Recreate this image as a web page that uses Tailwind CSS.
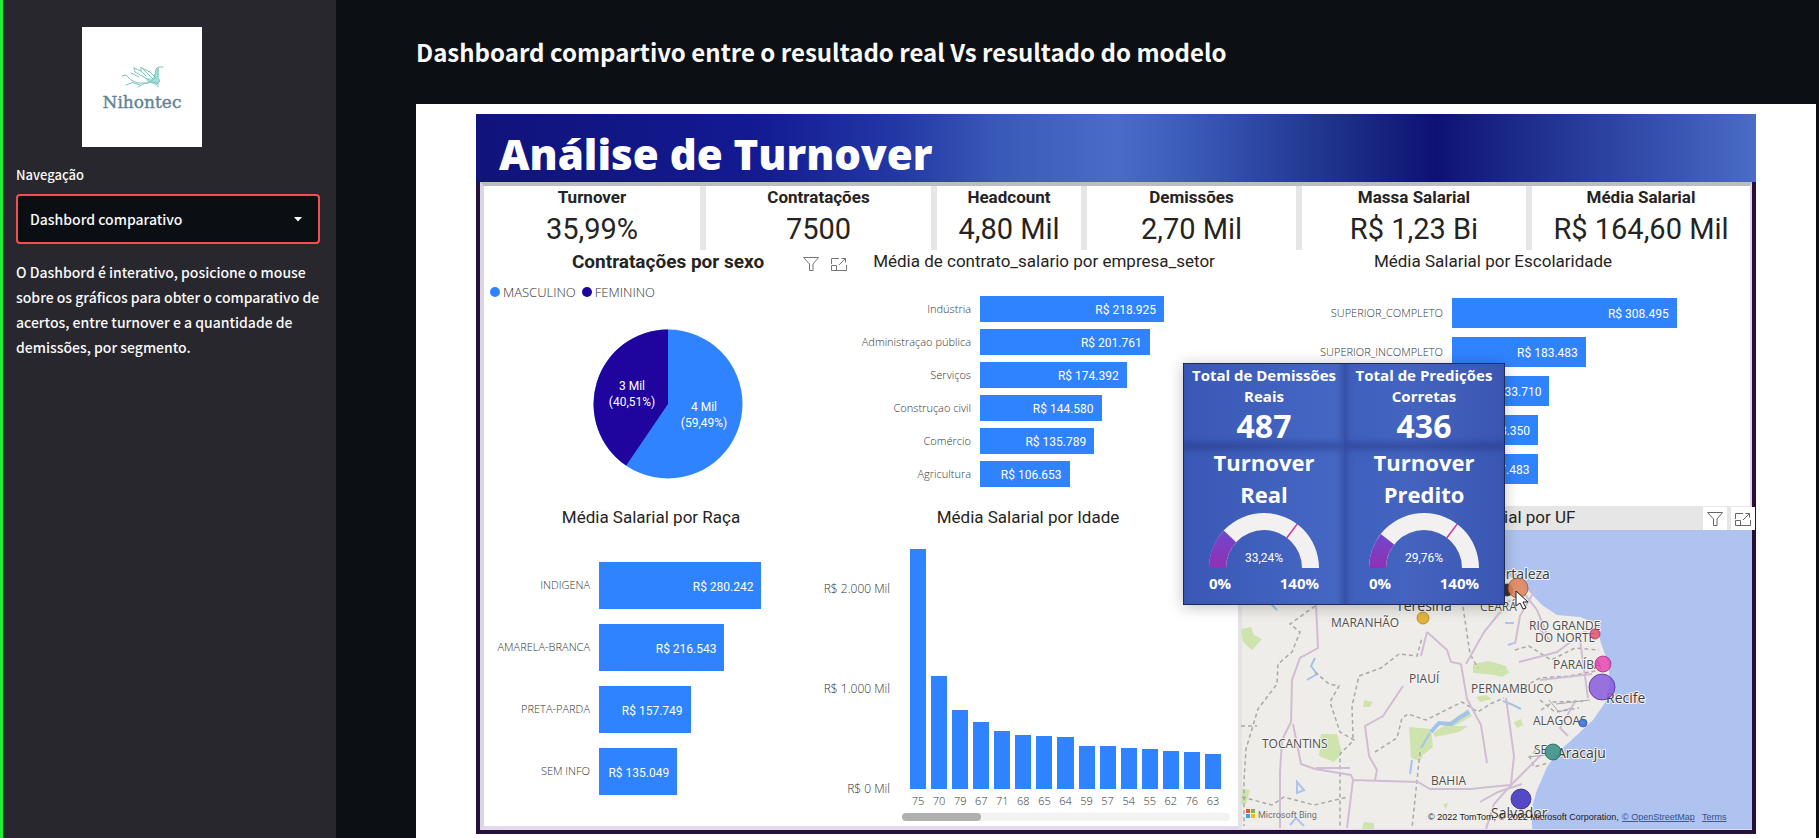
<!DOCTYPE html>
<html lang="pt-BR">
<head>
<meta charset="utf-8">
<meta name="viewport" content="width=device-width, initial-scale=1">
<title>Análise de Turnover</title>
<script src="https://cdn.jsdelivr.net/npm/@tailwindcss/browser@4"></script>
</head>
<body class="flex min-h-screen bg-[#0c1014] font-['Noto_Sans_CJK_SC','Open_Sans',sans-serif] text-[#fafafa]">

<aside class="w-[336px] shrink-0 border-l-3 border-[#1df03a] bg-[#28272e] pt-[27px] pr-4 pl-[13px]">
  <div class="ml-[66px] flex size-[120px] items-center justify-center bg-white">
    <svg class="size-full" viewBox="0 0 120 120" role="img" aria-label="Nihontec">
      <path d="M63 51l8 1 4-11 2 1-1 9 2 3-4 4-8-3z" fill="#a5ded6"/>
      <g fill="none" stroke="#7fc2bf" stroke-width="1" stroke-linejoin="round" stroke-linecap="round">
        <path d="M40 49l4-1 5 5 7 3 10 0 6-4 2-10 2-2 5 0M76 41l0 10 2 3-4 4"/>
        <path d="M71 52L59 40l0 4 5 5M52 41l1 4 14 8M59 44l-7-3M49 46l8 4M60 41l8 4 6 6"/>
        <path d="M44 58l8-3M56 60l5-3 8-2 7 1 0 4M52 56l6 2"/>
      </g>
      <text x="60" y="81" text-anchor="middle" font-family="DejaVu Serif, serif" font-size="17" fill="#5f8496" stroke="#5f8496" stroke-width=".4">Nihontec</text>
    </svg>
  </div>
  <label for="nav" class="mt-4 block text-[13px] leading-6 font-medium">Navegação</label>
  <div class="relative mt-[7px]">
    <select id="nav" class="block h-[50px] w-full appearance-none rounded-sm border-2 border-[#f0504f] bg-[#0b0f14] px-3 text-[14px] font-medium text-[#fafafa]"><option>Dashbord comparativo</option></select>
    <svg class="pointer-events-none absolute top-[23px] right-[18px] h-[5px] w-2" viewBox="0 0 8 5"><path d="M0 0h8L4 4.500z" fill="#fff"/></svg>
  </div>
  <p class="mt-4 text-[14px] leading-[25px] font-medium">O Dashbord é interativo, posicione o mouse sobre os gráficos para obter o comparativo de acertos, entre turnover e a quantidade de demissões, por segmento.</p>
</aside>

<main class="flex min-w-0 flex-1 flex-col pr-[3px] pl-20">
  <h1 class="flex h-[104px] items-center text-[24px] font-bold">Dashboard compartivo entre o resultado real Vs resultado do modelo</h1>

  <div class="flex-1 bg-white px-[60px] pt-[10px] pb-1 font-['Open_Sans','Noto_Sans',sans-serif] text-[#252423]">
   <div class="relative">
    <header class="flex h-[68px] items-center bg-[linear-gradient(90deg,#10137a_0%,#131a92_22%,#2338a5_33%,#3a5ab8_41%,#4a6cc8_50%,#3a5ab8_56%,#20368f_66%,#0d1272_75%,#20308f_83%,#3752b0_93%,#4a6cc6_100%)] pt-3 pl-[23px]">
      <h2 class="text-[42px] leading-none font-extrabold text-white">Análise de Turnover</h2>
    </header>

    <div class="border-x-4 border-b-4 border-[#260f38]">
     <div class="border-t-4 border-r-2 border-b-4 border-l-4 border-t-[#bdbcc2] border-r-[#e3d6ec] border-b-[#e3d9ec] border-l-[#dcd6e0]">

      <dl class="grid h-[64px] grid-cols-[222fr_231fr_150fr_215fr_230fr_218fr] text-center font-[Roboto,sans-serif] [&>div]:border-[#e6e6e6] [&_dd]:text-[29px] [&_dd]:leading-[42px] [&_dt]:text-[17px] [&_dt]:leading-[22px] [&_dt]:font-bold">
        <div class="border-r-6"><dt>Turnover</dt><dd>35,99%</dd></div>
        <div class="border-r-6"><dt>Contratações</dt><dd>7500</dd></div>
        <div class="border-r-6"><dt>Headcount</dt><dd>4,80 Mil</dd></div>
        <div class="border-r-6"><dt>Demissões</dt><dd>2,70 Mil</dd></div>
        <div class="border-r-6"><dt>Massa Salarial</dt><dd>R$ 1,23 Bi</dd></div>
        <div><dt>Média Salarial</dt><dd>R$ 164,60 Mil</dd></div>
      </dl>

      <div class="grid h-64 grid-cols-[368fr_384fr_514fr]">
        <section>
          <div class="grid h-6 grid-cols-[1fr_auto_1fr] items-center">
            <h3 class="col-start-2 font-[Roboto,sans-serif] text-[19px] leading-6 font-bold">Contratações por sexo</h3>
            <div class="flex gap-3 pt-1 pl-[39px]">
              <button aria-label="Filtros"><svg class="size-4" viewBox="0 0 16 16" fill="none" stroke="#777"><path d="M.5 1.500h15L10 8v6.500H6.500V8z"/></svg></button>
              <button aria-label="Modo de foco"><svg class="size-4" viewBox="0 0 16 16" fill="none" stroke="#777"><path d="M.5 8V2.500H8M15.500 9v5.500H.5V9.500h5v5M8 9l6.500-6.500M10.500 2.500h4v4"/></svg></button>
            </div>
          </div>
          <ul class="mt-[10px] flex gap-[6px] pl-[6px] text-[13px] leading-4 font-light text-[#333]">
            <li class="flex items-center gap-[3px]"><span class="size-[10px] rounded-full bg-[#3083ff]"></span>MASCULINO</li>
            <li class="flex items-center gap-[3px]"><span class="size-[10px] rounded-full bg-[#1f059e]"></span>FEMININO</li>
          </ul>
          <svg class="mx-auto mt-[29px] block size-[150px] font-[Roboto,sans-serif]" viewBox="0 0 150 150" font-size="12" fill="#fff" text-anchor="middle">
            <circle cx="75" cy="75" r="74.500" fill="#3083ff"/>
            <path d="M75 75V.5A74.500 74.500 0 0 0 33.200 136.600Z" fill="#1f059e"/>
            <text x="39" y="61">3 Mil</text><text x="39" y="77">(40,51%)</text>
            <text x="111" y="82">4 Mil</text><text x="111" y="98">(59,49%)</text>
          </svg>
        </section>

        <section>
          <h3 class="h-6 text-center font-[Roboto,sans-serif] text-[17px] leading-[22px]">Média de contrato_salario por empresa_setor</h3>
          <ul class="mt-[22px] flex flex-col gap-[7px] text-[11px] [&_div]:flex [&_div]:h-[26px] [&_div]:items-center [&_div]:justify-end [&_div]:bg-[#3083ff] [&_div]:pt-[2px] [&_div]:pr-2 [&_div]:font-[Roboto,sans-serif] [&_div]:text-[12px] [&_div]:text-white [&_li]:grid [&_li]:grid-cols-[119px_1fr] [&_li]:items-center [&_li]:gap-[9px] [&_span]:text-right [&_span]:font-light [&_span]:text-[#333]">
            <li><span>Indústria</span><div style="width:71.9%">R$ 218.925</div></li>
            <li><span>Administraçao pública</span><div style="width:66.3%">R$ 201.761</div></li>
            <li><span>Serviços</span><div style="width:57.3%">R$ 174.392</div></li>
            <li><span>Construçao civil</span><div style="width:47.5%">R$ 144.580</div></li>
            <li><span>Comércio</span><div style="width:44.6%">R$ 135.789</div></li>
            <li><span>Agricultura</span><div style="width:35%">R$ 106.653</div></li>
          </ul>
        </section>

        <section>
          <h3 class="h-6 text-center font-[Roboto,sans-serif] text-[17px] leading-[22px]">Média Salarial por Escolaridade</h3>
          <ul class="mt-6 flex flex-col gap-[9px] text-[11px] [&_div]:flex [&_div]:h-[30px] [&_div]:items-center [&_div]:justify-end [&_div]:bg-[#3083ff] [&_div]:pt-[2px] [&_div]:pr-2 [&_div]:font-[Roboto,sans-serif] [&_div]:text-[12px] [&_div]:text-white [&_li]:grid [&_li]:grid-cols-[207px_1fr] [&_li]:items-center [&_li]:gap-[9px] [&_span]:text-right [&_span]:font-light [&_span]:text-[#333]">
            <li><span>SUPERIOR_COMPLETO</span><div style="width:75.4%">R$ 308.495</div></li>
            <li><span>SUPERIOR_INCOMPLETO</span><div style="width:44.9%">R$ 183.483</div></li>
            <li><span></span><div style="width:32.7%">R$ 133.710</div></li>
            <li><span></span><div style="width:28.9%">R$ 118.350</div></li>
            <li><span></span><div style="width:28.7%">R$ 117.483</div></li>
          </ul>
        </section>
      </div>

      <div class="grid h-80 grid-cols-[334fr_420fr_512fr]">
        <section>
          <h3 class="h-6 text-center font-[Roboto,sans-serif] text-[17px] leading-[22px]">Média Salarial por Raça</h3>
          <ul class="mt-8 flex flex-col gap-[15px] text-[11px] [&_div]:flex [&_div]:h-[47px] [&_div]:items-center [&_div]:justify-end [&_div]:bg-[#3083ff] [&_div]:pt-[2px] [&_div]:pr-2 [&_div]:font-[Roboto,sans-serif] [&_div]:text-[12px] [&_div]:text-white [&_li]:grid [&_li]:grid-cols-[106px_1fr] [&_li]:items-center [&_li]:gap-[9px] [&_span]:text-right [&_span]:font-light [&_span]:text-[#333]">
            <li><span>INDIGENA</span><div style="width:74.2%">R$ 280.242</div></li>
            <li><span>AMARELA-BRANCA</span><div style="width:57.3%">R$ 216.543</div></li>
            <li><span>PRETA-PARDA</span><div style="width:41.8%">R$ 157.749</div></li>
            <li><span>SEM INFO</span><div style="width:35.7%">R$ 135.049</div></li>
          </ul>
        </section>

        <section>
          <h3 class="h-6 text-center font-[Roboto,sans-serif] text-[17px] leading-[22px]">Média Salarial por Idade</h3>
          <div class="mt-[19px] grid grid-cols-[72px_1fr] gap-x-3 pr-2 text-[12px] font-light text-[#333]">
            <div class="flex flex-col gap-[82px] pt-[31px] text-right leading-[18px] whitespace-nowrap">
              <span>R$ 2.000 Mil</span><span>R$ 1.000 Mil</span><span>R$ 0 Mil</span>
            </div>
            <div>
              <div class="flex h-60 items-end gap-[5px] pr-[9px] pl-2 [&>i]:flex-1 [&>i]:bg-[#3083ff]">
                <i style="height:100%"></i><i style="height:47%"></i><i style="height:33%"></i><i style="height:28%"></i><i style="height:24.100%"></i><i style="height:22.500%"></i><i style="height:22.200%"></i><i style="height:21.500%"></i><i style="height:17.800%"></i><i style="height:17.800%"></i><i style="height:17%"></i><i style="height:16.600%"></i><i style="height:15.800%"></i><i style="height:15.600%"></i><i style="height:14.500%"></i>
              </div>
              <div class="flex gap-[5px] pt-1 pr-[9px] pl-2 text-[11px] leading-4 [&>span]:flex [&>span]:w-0 [&>span]:flex-1 [&>span]:justify-center">
                <span>75</span><span>70</span><span>79</span><span>67</span><span>71</span><span>68</span><span>65</span><span>64</span><span>59</span><span>57</span><span>54</span><span>55</span><span>62</span><span>76</span><span>63</span>
              </div>
              <div class="mt-1 h-2 rounded-full bg-[#f3f2f2]"><div class="h-2 w-[24%] rounded-full bg-[#b0b0b0]"></div></div>
            </div>
          </div>
        </section>

        <section class="relative -mr-[2px] -mb-[3px] flex min-w-0 flex-col">
          <h3 class="h-6 bg-[#e6e6e6] text-center font-[Roboto,sans-serif] text-[17px] leading-[22px]">Média Salarial por UF</h3>
          <div class="absolute top-px -right-[3px] flex gap-1">
            <button aria-label="Filtros" class="flex h-[23px] w-6 items-center justify-center bg-white"><svg class="size-4" viewBox="0 0 16 16" fill="none" stroke="#666"><path d="M.5 1.500h15L10 8v6.500H6.500V8z"/></svg></button>
            <button aria-label="Modo de foco" class="flex h-[23px] w-6 items-center justify-center bg-white"><svg class="size-4" viewBox="0 0 16 16" fill="none" stroke="#666"><path d="M.5 8V2.500H8M15.500 9v5.500H.5V9.500h5v5M8 9l6.500-6.500M10.500 2.500h4v4"/></svg></button>
          </div>
          <svg class="block min-h-0 w-full flex-1" viewBox="1238 530 514 299" preserveAspectRatio="xMidYMid slice" font-size="12">
            <rect x="1230" y="520" width="530" height="320" fill="#aec3f0"/>
            <path d="M1230 520H1400L1480 558 1505 574 1520 582 1542 605 1557 615 1580 617 1595 623 1601 643 1608 663 1610 683 1605 703 1593 720 1577 735 1557 753 1547 767 1537 790 1531 810 1533 840H1230Z" fill="#efedea"/>
            <path d="M1237 530h5v300h-5z" fill="#e4e2e4"/>
            <g fill="#cfe3ae">
              <path d="M1241 629l10-2 3 8 8 4-10 11-9-8z"/><path d="M1321 734h16l5 19-8 9-15-6z"/><path d="M1409 727l22 2 2 18-10 8-3 6-9-3z"/>
              <path d="M1433 733l15-10 20-14 4 7-18 10 14 0-9 6-24 5z"/><path d="M1364 700l9 2-3 5-7 0z"/><path d="M1473 664l16-3 17 5 2 6-10 3-25-2z"/><path d="M1476 697l10-2 6 4-12 3z"/>
              <path d="M1478 664l18 2 14 6-8 5-24-6z"/><path d="M1514 722l7-3 2 6-6 3z"/><path d="M1242 789l8 1-4 14-5 0z"/><path d="M1364 822l10 1 0 6-12 0z"/><path d="M1443 804l5-1-2 6z"/>
            </g>
            <g fill="none" stroke="#a3c4ea" stroke-width="2">
              <path d="M1431 732l8-9 12 1 8-6 10-6" stroke-width="4"/><path d="M1315 658l-4 8 6 8-10 6M1271 604l6 6"/><path d="M1503 701l10 4 8 4M1430 733l-9 15M1412 760l-2 14"/>
              <path d="M1297 782l7 8-7 3zM1290 825l6-7 8 8M1505 623l9 0M1508 645l6-2" stroke="#aec3f0"/>
            </g>
            <g fill="none" stroke="#a9a9a9" stroke-width="1.500" stroke-dasharray="4 3">
              <path d="M1315 606l-25 18 10 8-8 20-14 12-1 20-19 25-12 40-2 32 0 45"/>
              <path d="M1315 672l14 12 10 2-9 16 10 30 14 8-14 14v74"/>
              <path d="M1353 738l-1-32 7-30 22-8 18-14 18 2 5-18"/>
              <path d="M1375 752l22-14 5-20 6-4 18 6 36-18 16 10 12-8 14-6"/>
              <path d="M1462 600l8 54 8 14M1242 797l30 8 12-8 30 8 34-8M1420 752l-8 76"/>
              <path d="M1515 650l14-4 22 14 24-12 24 2M1518 690l22-12 30-2 30-6M1540 745l-10 12 4 10 14-4M1540 700l15 12 24-4"/>
              <path d="M1241 726h16M1541 710l12-8 30-1"/>
            </g>
            <g fill="none" stroke="#d0bdd3" stroke-width="2">
              <path d="M1316 604l2 44-18 10-8 22-1 42-9 18-2 32 0 56M1293 724l8 40 14 5 36 6 2 5-6 48M1353 780l65 2 12 7 40 0 40-4M1316 768l34 0"/>
              <path d="M1427 632l-6 24M1427 632l20 18 4 12 10 2M1510 600l-26 32-18 32M1461 664l6 35 14 26 6 38M1403 686l-20 30-18 10 4 30 8 14-2 10"/>
              <path d="M1506 698l8 58-3 28M1486 829l8-25 18-20 30-30M1515 644l5-28 16-28M1523 592l14 18 10 24M1519 662l38-10 30-22M1580 640l8 58M1576 700l-16 28 8 8M1480 802l18-10 24-8M1540 680l52-6M1530 620l20 20"/>
            </g>
            <g fill="none" stroke="#a9a9a9"><path d="M1549 700l10 12 12-4M1546 755l-18 2M1590 700l-34 4"/></g>
            <g fill="#505050" stroke="#f5f3f1" stroke-width="2" paint-order="stroke" stroke-linejoin="round">
              <text x="1331" y="627">MARANHÃO</text><text x="1409" y="683">PIAUÍ</text><text x="1471" y="693">PERNAMBUCO</text><text x="1262" y="748">TOCANTINS</text><text x="1431" y="785">BAHIA</text>
              <text x="1480" y="611">CEARÁ</text><text x="1529" y="630">RIO GRANDE</text><text x="1535" y="642">DO NORTE</text><text x="1553" y="669">PARAÍBA</text><text x="1533" y="725">ALAGOAS</text><text x="1534" y="754">SE</text>
              <g font-size="14" fill="#3c3c3c"><text x="1396" y="611">Teresina</text><text x="1490" y="579">Fortaleza</text><text x="1606" y="703">Recife</text><text x="1557" y="758">Aracaju</text><text x="1491" y="818">Salvador</text></g>
            </g>
            <g stroke-opacity=".7">
              <circle cx="1423" cy="618" r="6" fill="#e2b43c" stroke="#a07818"/>
              <circle cx="1507" cy="590" r="6" fill="#40302e" stroke="#222"/>
              <circle cx="1518" cy="588" r="10" fill="#e0895f" fill-opacity=".92" stroke="#8d4a2c"/>
              <circle cx="1595" cy="634" r="5" fill="#e5506f" fill-opacity=".85" stroke="#a02c4a"/>
              <circle cx="1603" cy="664" r="8" fill="#e548b0" fill-opacity=".85" stroke="#9c2480"/>
              <circle cx="1602" cy="687" r="13" fill="#8a5bdc" fill-opacity=".85" stroke="#48248c"/>
              <circle cx="1583" cy="723" r="4" fill="#4478e0" fill-opacity=".9" stroke="#244c9c"/>
              <circle cx="1553" cy="752" r="8" fill="#3d9088" fill-opacity=".9" stroke="#1c5a54"/>
              <circle cx="1521" cy="799" r="10" fill="#473cc4" fill-opacity=".92" stroke="#241c78"/>
            </g>
            <g><path fill="#e8562a" d="M1246 809h4v4h-4z"/><path fill="#80b928" d="M1251 809h4v4h-4z"/><path fill="#3fa0e4" d="M1246 814h4v4h-4z"/><path fill="#f5b920" d="M1251 814h4v4h-4z"/></g>
            <text x="1258" y="818" font-family="Roboto, sans-serif" font-size="9" fill="#707070">Microsoft Bing</text>
            <g font-family="Liberation Sans, sans-serif" font-size="9" fill="#222">
              <text x="1428" y="820">© 2022 TomTom, © 2022 Microsoft Corporation,</text>
              <a href="#osm"><text x="1622" y="820" fill="#33508c" text-decoration="underline">© OpenStreetMap</text></a>
              <a href="#terms"><text x="1702" y="820" fill="#33508c" text-decoration="underline">Terms</text></a>
            </g>
            <path d="M1516 591v15l4-3 3 6 3-1-3-6h5z" fill="#fff" stroke="#222"/>
          </svg>
        </section>
      </div>
     </div>
    </div>

    <div role="tooltip" class="absolute top-[249px] left-[707px] grid w-[322px] grid-cols-2 border border-[#1f2a55] text-center font-bold text-white shadow-[0_2px_14px_rgba(0,0,0,0.25)]">
      <div class="h-[82px] bg-[linear-gradient(90deg,#3a58b5,#4668c4)] pt-px shadow-[inset_-3px_-4px_6px_rgba(30,40,110,0.35)]"><h4 class="text-[15px] leading-[21px]">Total de Demissões<br>Reais</h4><p class="text-[32px] leading-[37px]">487</p></div>
      <div class="h-[82px] bg-[linear-gradient(90deg,#3f5fbd,#4464c0_40%,#3a56b2)] pt-px shadow-[inset_3px_-4px_6px_rgba(30,40,110,0.35)]"><h4 class="text-[15px] leading-[21px]">Total de Predições<br>Corretas</h4><p class="text-[32px] leading-[37px]">436</p></div>
      <div class="h-[158px] bg-[linear-gradient(90deg,#3a58b5,#4668c4)] shadow-[inset_-3px_4px_6px_rgba(30,40,110,0.35)]">
        <h4 class="text-[22px] leading-8">Turnover<br>Real</h4>
        <svg class="mx-auto block h-[88px] w-[120px]" viewBox="0 0 120 88">
          <defs><linearGradient id="fillGradient" x1="0" y1="0" x2="0" y2="1"><stop offset="0" stop-color="#7048cc"/><stop offset="1" stop-color="#9030b4"/></linearGradient></defs>
          <path d="M5 58A55 55 0 0 1 115 58H98A38 38 0 0 0 22 58Z" fill="#f2f0f0"/>
          <path d="M5 58A55 55 0 0 1 19.700 20.600L32.200 32.200A38 38 0 0 0 22 58Z" fill="url(#fillGradient)"/>
          <path d="M82.900 27.700L93.100 14.100" stroke="#d0309c" stroke-width="1.500"/>
          <text x="60" y="52" font-family="Roboto, sans-serif" font-size="12" font-weight="400" text-anchor="middle" fill="#fff">33,24%</text>
          <g font-size="15" fill="#fff"><text x="5" y="79">0%</text><text x="115" y="79" text-anchor="end">140%</text></g>
        </svg>
      </div>
      <div class="h-[158px] bg-[linear-gradient(90deg,#3f5fbd,#4464c0_40%,#3a56b2)] shadow-[inset_3px_4px_6px_rgba(30,40,110,0.35)]">
        <h4 class="text-[22px] leading-8">Turnover<br>Predito</h4>
        <svg class="mx-auto block h-[88px] w-[120px]" viewBox="0 0 120 88">
          <path d="M5 58A55 55 0 0 1 115 58H98A38 38 0 0 0 22 58Z" fill="#f2f0f0"/>
          <path d="M5 58A55 55 0 0 1 16.800 24L30.200 34.500A38 38 0 0 0 22 58Z" fill="url(#fillGradient)"/>
          <path d="M82.900 27.700L93.100 14.100" stroke="#d0309c" stroke-width="1.500"/>
          <text x="60" y="52" font-family="Roboto, sans-serif" font-size="12" font-weight="400" text-anchor="middle" fill="#fff">29,76%</text>
          <g font-size="15" fill="#fff"><text x="5" y="79">0%</text><text x="115" y="79" text-anchor="end">140%</text></g>
        </svg>
      </div>
    </div>
   </div>
  </div>
</main>
</body>
</html>
